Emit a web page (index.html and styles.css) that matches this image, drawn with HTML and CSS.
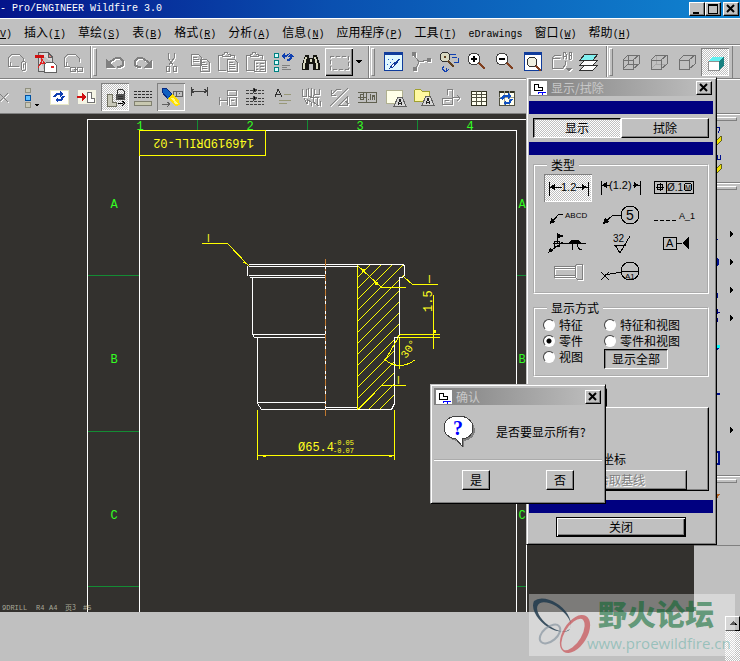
FILE: index.html
```html
<!DOCTYPE html>
<html lang="zh-CN">
<head>
<meta charset="utf-8">
<title>Pro/ENGINEER Wildfire 3.0</title>
<link rel="stylesheet" href="styles.css">
</head>
<body>
<div class="app">
  <header class="titlebar">
    <h1 class="titlebar-text">- Pro/ENGINEER Wildfire 3.0</h1>
    <div class="window-buttons">
      <button class="win-btn" aria-label="最小化"><svg width="14" height="12"><path d="M3 9h6v2H3z"/></svg></button>
      <button class="win-btn" aria-label="最大化"><svg width="14" height="12"><path d="M2 1h10v10H2zM3 3v7h8V3z" fill-rule="evenodd"/></svg></button>
      <button class="win-btn win-close" aria-label="关闭窗口"><svg width="14" height="12"><path class="cross" d="M3 2l7 7M10 2l-7 7"/></svg></button>
    </div>
  </header>

  <nav class="menubar">
    <a href="#"><span class="key"><u>V</u>)</span></a>
    <a href="#">插入<span class="key">(<u>I</u>)</span></a>
    <a href="#">草绘<span class="key">(<u>S</u>)</span></a>
    <a href="#">表<span class="key">(<u>B</u>)</span></a>
    <a href="#">格式<span class="key">(<u>R</u>)</span></a>
    <a href="#">分析<span class="key">(<u>A</u>)</span></a>
    <a href="#">信息<span class="key">(<u>N</u>)</span></a>
    <a href="#">应用程序<span class="key">(<u>P</u>)</span></a>
    <a href="#">工具<span class="key">(<u>T</u>)</span></a>
    <a href="#"><span class="key">eDrawings</span></a>
    <a href="#">窗口<span class="key">(<u>W</u>)</span></a>
    <a href="#">帮助<span class="key">(<u>H</u>)</span></a>
  </nav>

  <div class="toolbar">
    <div class="group group-first">
      <button class="tool" aria-label="附件"><svg class="emb" viewBox="0 0 28 28"><path d="M6 18V10l4-4h7l4 4v3M6 18h11M8 14v4M19 15v6l2 2 2-1v-8l-2-1-2 2M21 16v4"/></svg></button>
      <button class="tool" aria-label="导出 PDF"><svg viewBox="0 0 28 28"><path d="M8 4h10l4 4v6M8 4v19h6" stroke="#606060" fill="#d8d8d8"/><path d="M18 4v5h4z" fill="#f08080" stroke="#606060"/><path d="M5 7h9v3H5z" fill="#d01010"/><path d="M12 10c0 5-3 8-4 10M12 11c1 3 3 5 6 5M9 17c2-2 4-2 7-2" stroke="#e02020" fill="none"/><path d="M14 17l3-3h6l3 3v7H14z" fill="#fff" stroke="#606060"/><path d="M21 18h3v2h-3z" fill="#e02020"/></svg></button>
      <button class="tool" aria-label="链接"><svg class="emb" viewBox="0 0 28 28"><path d="M6 18V10l4-4h7l4 4v4M6 18h6M8 14v4M12 19h5v4h-5zM16 21h4M19 19h5v4h-5z"/></svg></button>
    </div>
    <div class="group">
      <i class="grip"></i>
      <button class="tool" aria-label="撤消"><svg class="emb thick" viewBox="0 0 28 28"><path d="M7 17l3-4 5-3h4l3 3v4l-3 2h-3"/><path d="M5 11v9h9z" fill="#808080" stroke="none"/></svg></button>
      <button class="tool" aria-label="重做"><svg class="emb thick" viewBox="0 0 28 28"><path d="M21 17l-3-4-5-3H9l-3 3v4l3 2h3"/><path d="M23 11v9h-9z" fill="#808080" stroke="none"/></svg></button>
      <button class="tool" aria-label="剪切"><svg class="emb" viewBox="0 0 28 28"><path d="M11 5v5l5 7M17 5v5l-5 7M9 18h3v5H9zM16 18h3v5h-3z"/></svg></button>
      <button class="tool" aria-label="复制"><svg class="emb" viewBox="0 0 28 28"><path d="M6 6h7l3 3v8H6zM8 9h4M8 11h6M8 13h6M15 11h6l3 3v9h-9zM17 14h3M17 16h5M17 18h5M17 20h5"/></svg></button>
      <button class="tool" aria-label="粘贴"><svg class="emb" viewBox="0 0 28 28"><path d="M9 7H5v15h8M17 7h4v3M9 8h8V6h-2l-1-2h-2l-1 2H9zM14 11h7l3 3v9H14zM16 14h4M16 16h6M16 18h6M16 20h6"/></svg></button>
      <button class="tool" aria-label="选择性粘贴"><svg class="emb" viewBox="0 0 28 28"><path d="M9 7H5v15h8M17 7h4v4M9 8h8V6h-2l-1-2h-2l-1 2H9zM13 12h11v11H13zM15 15h2M19 15h4M15 18h2M19 18h4M15 21h2M19 21h4"/></svg></button>
      <button class="tool" aria-label="再生"><svg viewBox="0 0 28 28"><path d="M5 5h4v4H5zM5 12h4v4H5zM5 19h4v4H5z" fill="#d8ffff" stroke="#008080"/><path d="M13 17h8M13 19h5M13 21h9" stroke="#808080"/><path d="M12 8l4-4v3c3 0 4-2 5-3v1c-1 3-3 4-5 4v3z" fill="#1040b0"/><path d="M19 9l3-4 3 4h-2c0 3-2 4-5 4v-2c2 0 3 0 3-2z" fill="#1040b0"/></svg></button>
      <button class="tool" aria-label="查找"><svg viewBox="0 0 28 28"><path d="M8 7h4v3h4V7h4l3 10v5h-7v-6h-4v6H5v-5z" fill="#151510"/><path d="M9 9l-2 8v4M18 9l2 8v4M14 11v3" stroke="#d8d8c0" stroke-width="2" fill="none"/></svg></button>
      <button class="tool raised" aria-label="选取框"><svg class="emb" viewBox="0 0 28 28"><path d="M5 8h18v13H5z" stroke-dasharray="4 2"/></svg></button>
      <button class="drop" aria-label="更多"><svg width="12" height="28"><path d="M3 12h6l-3 4z"/></svg></button>
    </div>
    <div class="group">
      <i class="grip"></i>
      <button class="tool" aria-label="重画"><svg viewBox="0 0 28 28"><path d="M5 4h18v18H5z" fill="#e0f8ff" stroke="#103c9c"/><path d="M5 4h18v3H5z" fill="#103c9c"/><path d="M9 11h1M11 14h1M8 16h1M13 11h1M11 18h1M14 16h1" stroke="#2060d0"/><path d="M21 11l-7 8-3 1 2-3z" fill="#fff" stroke="#103c9c"/></svg></button>
      <button class="tool" aria-label="旋转中心"><svg class="emb" viewBox="0 0 28 28"><path d="M7 7l5 7 9-2M12 14l-3 6"/><g fill="#808080"><circle cx="7" cy="6" r="2"/><circle cx="22" cy="12" r="2"/><circle cx="8" cy="21" r="2"/></g></svg></button>
      <button class="tool" aria-label="定向模式"><svg viewBox="0 0 28 28"><circle cx="10" cy="9" r="5" fill="#d8d8c0" stroke="#303030"/><path d="M10 8v2M13 13l6 6" stroke="#604020" stroke-width="2"/><path d="M15 6h6M17 9h5M23 10v4h-4M9 18l-2 3 4 3 3-3M11 20v4" stroke="#1040b0" fill="none"/></svg></button>
      <button class="tool" aria-label="放大"><svg viewBox="0 0 28 28"><circle cx="11" cy="11" r="6" fill="#fff" stroke="#404040"/><path d="M8 11h6M11 8v6" stroke="#000" stroke-width="2"/><path d="M16 15l6 6" stroke="#804020" stroke-width="2"/></svg></button>
      <button class="tool" aria-label="缩小"><svg viewBox="0 0 28 28"><circle cx="11" cy="11" r="6" fill="#fff" stroke="#404040"/><path d="M8 11h6" stroke="#000" stroke-width="2"/><path d="M16 15l6 6" stroke="#804020" stroke-width="2"/></svg></button>
      <button class="tool" aria-label="重新调整"><svg viewBox="0 0 28 28"><path d="M5 4h17v18H5z" fill="#fff" stroke="#103c9c"/><path d="M5 4h17v3H5z" fill="#103c9c"/><circle cx="13" cy="14" r="5" fill="#f0f0e0" stroke="#303030"/><path d="M17 18l5 5" stroke="#804020" stroke-width="2"/></svg></button>
      <button class="tool" aria-label="已命名视图"><svg class="emb" viewBox="0 0 28 28"><path d="M5 20V10l3-3h6M5 20h11l2-3v-4M5 10h8M16 11V6l1-2h1l1 2v5M16 8h3M22 11V4h2l1 2-1 1h-2M24 7l1 2-1 2h-2"/><path d="M19 20h6l-3 3z" fill="#808080"/></svg></button>
      <button class="tool" aria-label="层"><svg viewBox="0 0 28 28"><g stroke="#303030"><path d="M5 22l5-5h13l-5 5z" fill="#fff"/><path d="M5 17l5-5h13l-5 5z" fill="#fff"/><path d="M5 12l5-6h13l-5 6z" fill="#80f0f0"/></g></svg></button>
    </div>
    <div class="group">
      <i class="grip"></i>
      <button class="tool" aria-label="线框"><svg class="cube" viewBox="0 0 28 28"><path d="M6 12h10v9H6zM6 12l5-5h11v9l-6 5M16 12l6-5M11 7v9h11M11 16l-5 5"/></svg></button>
      <button class="tool" aria-label="隐藏线"><svg class="cube" viewBox="0 0 28 28"><path d="M11 8v8h10M11 16l-5 5" stroke="#a8a8a8"/><path d="M6 12h10v9H6zM6 12l5-5h11v9l-6 5M16 12l6-5"/></svg></button>
      <button class="tool" aria-label="无隐藏线"><svg class="cube" viewBox="0 0 28 28"><path d="M6 12h10v9H6zM6 12l5-5h11v9l-6 5M16 12l6-5"/></svg></button>
      <button class="tool pressed" aria-label="着色"><svg viewBox="0 0 28 28"><path d="M7 13h11v9H7z" fill="#fff" stroke="#909090"/><path d="M7 13l4-4h12l-5 4z" fill="#60f0f0"/><path d="M18 13l5-4v8l-5 5z" fill="#188080"/></svg></button>
    </div>
  </div>

  <div class="toolbar toolbar-second">
    <div class="group">
      <button class="tool tool-cut" aria-label="删除"><svg class="emb" viewBox="11 0 17 28"><path d="M10 10l9 9M19 10l-9 9"/></svg></button>
      <button class="tool" aria-label="对齐视图"><svg viewBox="0 0 28 28"><path d="M8 5h5v4H8zM8 19h5v5H8z" fill="#c8c8b8" stroke="#909080"/><path d="M8 12h5v5H8z" fill="#60c0ff" stroke="#0050a0"/><path d="M17 21h5l-2 3z"/></svg></button>
      <button class="tool" aria-label="更新"><svg viewBox="0 0 28 28"><path d="M5 7h18v14H5z" fill="#fff" stroke="#e8e8c8"/><path d="M8 14l3-4h4V8l3 3-3 3v-2h-3l-1 2zM20 13l-3 5h-4v2l-3-3 3-3v2h3l1-3z" fill="#1040b0"/></svg></button>
      <button class="tool" aria-label="移动视图"><svg viewBox="0 0 28 28"><path d="M5 7h18v14H5z" fill="#f4f4e4"/><path d="M14 9v10h7v-4h-3V9z" fill="#fff" stroke="#707070"/><path d="M4 13h5v-3l4 4-4 4v-3H4z" fill="#d01010"/></svg></button>
      <button class="tool pressed" aria-label="锁定视图"><svg viewBox="0 0 28 28"><path d="M6 11v12h9v-4h-4v-8z" fill="#c8c8b8" stroke="#707060"/><path d="M15 11h9v6h-9z" fill="#505050"/><path d="M16 11V8l2-2h3l2 2v3M17 13h5M17 15h5" stroke="#303030" fill="none"/><path d="M17 20h5M21 18l3 2-3 3" stroke="#000" fill="none"/></svg></button>
      <button class="tool" aria-label="线型"><svg viewBox="0 0 28 28"><path d="M5 8h18M5 11h18M5 14h18" stroke="#303030" stroke-dasharray="3 1"/><path d="M5 18h17v4H5z" fill="#c8c8b0" stroke="#808070"/></svg></button>
      <button class="tool sunk" aria-label="显示及拭除"><svg viewBox="0 0 28 28"><path d="M16 8h9v5h-9zM19 8v5M22 10h1M5 21h8M10 19l3 2-3 3" stroke="#606060" fill="none"/><path d="M5 5h4l6 6-4 5-6-7z" fill="#1060c0" stroke="#082880"/><path d="M11 15l4-4 7 7 1 4-5 1z" fill="#ffe000"/><path d="M15 15l5 6" stroke="#fff880" stroke-width="2"/></svg></button>
      <button class="tool" aria-label="尺寸"><svg class="dim" viewBox="0 0 28 28"><path d="M6 4v9M22 4v9M6 8h16M9 6l-3 2 3 2M19 6l3 2-3 2"/></svg></button>
      <button class="tool" aria-label="参照尺寸"><svg class="emb" viewBox="0 0 28 28"><path d="M6 22v-8M6 17h8M14 14v8M14 7v5h9V7h-9M16 22v-8h7v8h-7M18 17h3"/></svg></button>
      <button class="tool" aria-label="纵坐标"><svg class="dim" viewBox="0 0 28 28"><path d="M5 7h18M5 10h18M5 15h18M5 18h18M5 21h18" stroke-dasharray="3 1"/><path d="M12 5l4 2-4 3zM12 13l4 2-4 3z" fill="#000"/></svg></button>
      <button class="tool" aria-label="注释"><svg class="dim" viewBox="0 0 28 28"><path d="M6 14l3-8 4 8M7 11h4" stroke="#303030"/><path d="M15 11h7M10 17h12M10 20h8" stroke="#989878"/></svg></button>
      <button class="tool" aria-label="表面粗糙度"><svg class="emb" viewBox="0 0 28 28"><path d="M5 6v7h4V6M11 5v8h3V5M17 6v5h5V6M7 15l3 6v-5l4 3v4M13 14h9M16 12v7l6 4M20 15v6M23 18v5"/></svg></button>
      <button class="tool" aria-label="几何公差"><svg class="emb" viewBox="0 0 28 28"><path d="M6 7v5h5M7 11L12 6h4M5 23L23 5M14 22L22 14v8zM20 18l4 3"/></svg></button>
      <button class="tool" aria-label="公差框"><svg class="dim" viewBox="0 0 28 28"><path d="M5 9h18v10H5M13 9v10M5 14h8M7 12v4h3v-5zM15 17v-1M17 11v6M19 17v-5l1 2 1-2v5" stroke="#606050"/></svg></button>
      <button class="tool" aria-label="绘制注释"><svg viewBox="0 0 28 28"><path d="M5 7h16v13H5z" fill="#ffffe8" stroke="#b0b090"/><path d="M13 23l4-9h4l4 9z" fill="#d8d8d8" stroke="#606060"/><path d="M17 22l2-6 2 6M18 20h2" stroke="#202020" fill="none"/></svg></button>
      <button class="tool" aria-label="打开注释"><svg viewBox="0 0 28 28"><path d="M5 8l2-2h4l2 2h7v10H5z" fill="#fff9a0" stroke="#a0a030"/><path d="M13 22l4-9h4l4 9z" fill="#d8d8d8" stroke="#606060"/><path d="M17 21l2-6 2 6M18 19h2" stroke="#202020" fill="none"/></svg></button>
      <button class="tool" aria-label="剖面箭头"><svg class="emb" viewBox="0 0 28 28"><path d="M10 12V6h5v10M5 21v-6h10v6zM8 17h4M15 14h8M20 12l3 3-3 3"/></svg></button>
      <button class="tool" aria-label="表格"><svg viewBox="0 0 28 28"><path d="M6 8h15v14H6z" fill="#fffff0" stroke="#303020"/><path d="M6 11h15M6 14h15M6 18h15M11 8v14M16 8v14" stroke="#505040"/></svg></button>
      <button class="tool" aria-label="更新表格"><svg viewBox="0 0 28 28"><path d="M6 8h15v14H6z" fill="#fffff0" stroke="#505040"/><path d="M6 8h15v2H6z" fill="#303020"/><path d="M11 8v14M16 8v14M6 14h15" stroke="#a0a090"/><path d="M7 16l3-4h5v-2l3 3-3 3v-2h-3l-2 3zM20 16l-3 5h-4v2l-3-3 3-3v2h3l1-3z" fill="#1050c0"/></svg></button>
    </div>
  </div>

  <main class="workspace">
    <section class="sheet" aria-label="图纸">
      <svg class="drawing" width="527" height="498" viewBox="0 113 527 498" font-family="Liberation Mono, monospace">
        <g transform="translate(.5 .5)" fill="none" shape-rendering="crispEdges">
          <path stroke="#148c34" d="M197 118v11M307 118v11M417 118v11M87 274h52M87 430h52M87 585h52M516 274h11M516 430h11M516 585h11"/>
          <path stroke="#fff" d="M87 611V118H527M139 611V129H516V611M526 118V611"/>
          <path stroke="#ff0" d="M139 129H265V154H139z"/>
          <clipPath id="section"><path d="M357 263H404V276H399V334L394 337V402L391 408H357z"/></clipPath>
          <path clip-path="url(#section)" stroke="#ff0" d="M357 276l60-60M357 287l60-60M357 298l60-60M357 309l60-60M357 320l60-60M357 331l60-60M357 342l60-60M357 353l60-60M357 364l60-60M357 375l60-60M357 386l60-60M357 397l60-60M357 408l60-60M357 419l60-60M357 430l60-60M357 441l60-60"/>
          <path stroke="#fff" d="M248 263H403M248 265H357M247 264V274M248 274H325M249 276H325M403 263l1 2v9l-2 2h-3V334M252 276V333H325M252 333l2 3H325M257 336V402M257 401H325M257 402l4 6H391l3-6V336h5M325 265V408M325 406H357M357 265V408"/>
          <path stroke="#c07830" stroke-dasharray="7 3 2 3" d="M325 257V414"/>
          <path stroke="#ff0" d="M201 242h26l20 21M357 264l24 22h24M358 408l23-24h24M404 276l8 7h25M433 293v54M399 333h40M399 336h40M399 334l-14 24M384 358q15 12 31 0M399 336v31M257 408v50M394 408v50M257 454H394M357 265v143"/>
          <path fill="#ff0" d="M244 259l4 5-6-3zM361 267h3v3h-3zM374 280h3v3h-3zM262 453h3v2h-3zM388 453h3v2h-3zM433 328h2v3h-2z"/>
        </g>
        <g class="grid-mark" text-anchor="middle">
          <text x="140" y="129">1</text><text x="250" y="129">2</text><text x="360" y="129">3</text><text x="470" y="129">4</text>
          <text x="114" y="207">A</text><text x="114" y="362">B</text><text x="114" y="518">C</text>
          <text x="522" y="207">A</text><text x="522" y="362">B</text><text x="522" y="518">C</text>
        </g>
        <g fill="#ffff20" font-size="12">
          <text transform="translate(254 138) rotate(180)">146919DRILL-02</text>
          <text x="298" y="450">Ø65.4</text>
          <text x="333" y="444" font-size="7">-0.05</text>
          <text x="333" y="452" font-size="7">-0.07</text>
          <text transform="translate(432 311) rotate(-90)">1.5</text>
          <text transform="translate(406 358) rotate(-55)" font-size="11">30°</text>
          <g font-family="Liberation Sans, sans-serif" font-size="10">
            <text x="207" y="241">I</text><text x="428" y="282">I</text><text x="397" y="383">I</text>
          </g>
        </g>
        <g fill="#a8a898" font-size="7">
          <text x="2" y="609">9DRILL</text><text x="36" y="609">R4</text><text x="49" y="609">A4</text>
          <text x="65" y="609" font-family="Noto Sans CJK SC, sans-serif">页3</text><text x="83" y="609">#5</text>
        </g>
      </svg>
    </section>
    <aside class="sidebar">
      <div class="side-group">
        <i class="side-grip"></i>
        <button class="side-tool" aria-label="基准轴"><svg viewBox="0 0 40 28"><path d="M20 4h2l1 2-2 4" stroke="#001090" fill="none"/><path d="M18 19l6-6 1 4-5 5z" fill="#f0e000" stroke="#606020"/></svg></button>
        <button class="side-tool" aria-label="基准面"><svg viewBox="0 0 40 28"><path d="M20 4v5M23 4v5M20 8h3" stroke="#001090"/><path d="M18 19l6-6 1 4-5 5z" fill="#f0e000" stroke="#606020"/></svg></button>
      </div>
      <div class="side-group">
        <i class="side-grip"></i>
        <button class="side-tool" aria-label="选取"><svg viewBox="0 0 40 28"><path d="M8 6v14l4-4h6"/></svg></button>
        <button class="side-tool" aria-label="直线"><svg viewBox="0 0 40 28"><path d="M8 8l13 12" stroke="#001090"/><path d="M33 11l4 3-4 3z"/></svg></button>
        <button class="side-tool" aria-label="圆"><svg viewBox="0 0 40 28"><circle cx="15" cy="14" r="6" fill="none" stroke="#001090" stroke-width="2"/><path d="M33 11l4 3-4 3z"/></svg></button>
        <button class="side-tool" aria-label="圆弧"><svg viewBox="0 0 40 28"><path d="M8 10q12 0 13 12" fill="none" stroke="#001090"/><path d="M33 11l4 3-4 3z"/></svg></button>
        <button class="side-tool" aria-label="圆角"><svg viewBox="0 0 40 28"><path d="M20 5v5M18 8h5M20 14v4" stroke="#000080"/><path d="M33 11l4 3-4 3z"/></svg></button>
        <button class="side-tool" aria-label="样条"><svg viewBox="0 0 40 28"><path d="M8 20q10 4 14-6" fill="none" stroke="#001090" stroke-width="2"/><path d="M20 13h3v3h-3z" fill="#0ff"/></svg></button>
        <button class="side-tool" aria-label="点"><svg viewBox="0 0 40 28"><path d="M10 14h6M13 11v6" stroke="#001090"/></svg></button>
        <button class="side-tool" aria-label="投影"><svg viewBox="0 0 40 28"><path d="M10 6h13" stroke="#001090" stroke-width="2"/></svg></button>
        <button class="side-tool" aria-label="偏移"><svg viewBox="0 0 40 28"><path d="M10 10h8v8" fill="none" stroke="#001090"/><path d="M33 11l4 3-4 3z"/></svg></button>
        <button class="side-tool" aria-label="修剪"><svg viewBox="0 0 40 28"><path d="M10 8h12v12H10z" fill="none" stroke="#001090" stroke-width="2"/></svg></button>
      </div>
      <div class="side-group side-last">
        <i class="side-grip"></i>
        <button class="side-tool" aria-label="格式刷"><svg viewBox="0 0 40 28"><path d="M20 9h3l-3 5z" fill="#b06020"/></svg></button>
      </div>
    </aside>
  </main>

  <footer class="statusbar">
    <div class="scrollbar"><button class="scroll-up" aria-label="向上滚动"><svg width="12" height="11"><path d="M2 7l4-4 4 4z"/></svg></button></div>
  </footer>

  <section class="dialog show-dialog" aria-label="显示/拭除">
    <header class="dialog-title">
      <svg class="app-icon" viewBox="0 0 16 14"><path d="M0 0h16v14H0z" fill="#fff"/><path d="M3 3h4v3h4v3H3z" fill="none" stroke="#000"/><path d="M7 13v-2h8M11 11v3" stroke="#00f" fill="none"/></svg>
      <h2>显示/拭除</h2>
      <button class="win-btn" aria-label="关闭对话框"><svg width="12" height="11"><path class="cross" d="M2 2l7 7M9 2l-7 7"/></svg></button>
    </header>
    <div class="stripe"></div>
    <div class="mode-tabs"><button class="mode-on">显示</button><button>拭除</button></div>
    <div class="stripe"></div>
    <fieldset class="types">
      <legend>类型</legend>
      <div class="type-grid">
        <button class="type pressed" aria-label="尺寸"><svg viewBox="0 0 48 28"><path d="M5 8v14M44 8v14M5 13h13M32 13h12"/><path class="solid" d="M6 13l5-3v6zM43 13l-5-3v6z"/><text x="17" y="17">1.2</text></svg></button>
        <button class="type" aria-label="参照尺寸"><svg viewBox="0 0 48 28"><path d="M4 7v14M43 7v14M4 11h9M36 11h7"/><path class="solid" d="M5 11l5-3v6zM42 11l-5-3v6z"/><text x="12" y="15">(1.2)</text></svg></button>
        <button class="type" aria-label="几何公差"><svg viewBox="0 0 48 28"><path d="M4 7h39v12H4zM16 7v12M6 13h8M10 9v8"/><circle cx="10" cy="13" r="3"/><circle cx="38" cy="13" r="4"/><text x="17" y="17" font-size="10">Ø.1</text><text x="35" y="16" font-size="7">M</text></svg></button>
        <button class="type" aria-label="注释"><svg viewBox="0 0 48 28"><path d="M7 21l8-9h4"/><path class="solid" d="M6 22l1-6 4 4z"/><text x="21" y="16" font-size="8">ABCD</text></svg></button>
        <button class="type" aria-label="球标"><svg viewBox="0 0 48 28"><path d="M7 21l9-8h8"/><path class="solid" d="M6 22l2-6 4 4z"/><circle cx="33" cy="13" r="9"/><text x="29" y="18" font-size="14">5</text></svg></button>
        <button class="type" aria-label="轴"><svg viewBox="0 0 48 28"><path d="M4 18h24" stroke-dasharray="4 2"/><text x="29" y="17" font-size="9">A_1</text></svg></button>
        <button class="type" aria-label="符号"><svg viewBox="0 0 48 28"><path d="M5 22l14-10M13 14V3M9 13h33M28 13v7M33 13q1 7 5 7"/><circle cx="13" cy="14" r="3"/><path class="solid" d="M4 23l2-5 3 3zM13 3l7 3-7 3zM24 13l3-3h7l3 3z"/></svg></button>
        <button class="type" aria-label="表面粗糙度"><svg viewBox="0 0 48 28"><path d="M17 15h12M18 15l5 8 10-17"/><text x="16" y="12" font-size="10">32</text></svg></button>
        <button class="type" aria-label="基准平面"><svg viewBox="0 0 48 28"><path d="M13 7h13v12H13zM26 13h6M38 7v12"/><path class="solid" d="M32 13l6-5v10z"/><text x="16" y="17">A</text></svg></button>
        <button class="type" aria-label="修饰特征"><svg class="emb" viewBox="0 0 48 28"><path d="M10 8h21v11H10zM10 10h21M10 17h21M31 8l2-2h5v15h-5l-2-2"/></svg></button>
        <button class="type" aria-label="基准目标"><svg viewBox="0 0 48 28"><path d="M4 14l8 8M12 14l-8 8M8 17l16-3M24 13h18"/><circle cx="33" cy="13" r="9"/><text x="28" y="21" font-size="8">A1</text></svg></button>
      </div>
    </fieldset>
    <fieldset class="show-by">
      <legend>显示方式</legend>
      <div class="radio-grid">
        <label><input type="radio" name="by">特征</label>
        <label><input type="radio" name="by">特征和视图</label>
        <label><input type="radio" name="by" checked>零件</label>
        <label><input type="radio" name="by">零件和视图</label>
        <label><input type="radio" name="by">视图</label>
        <button class="show-all">显示全部</button>
      </div>
    </fieldset>
    <div class="tab-head"></div>
    <div class="tab-panel">
      <p>切换纵坐标</p>
      <button class="face pick" disabled>拾取基线</button>
    </div>
    <div class="stripe"></div>
    <button class="face close-btn">关闭</button>
  </section>

  <section class="dialog confirm-dialog" aria-label="确认">
    <header class="dialog-title">
      <svg class="app-icon" viewBox="0 0 16 14"><path d="M0 0h16v14H0z" fill="#fff"/><path d="M3 3h4v3h4v3H3z" fill="none" stroke="#000"/><path d="M7 13v-2h8M11 11v3" stroke="#00f" fill="none"/></svg>
      <h2>确认</h2>
      <button class="win-btn" aria-label="关闭确认"><svg width="12" height="11"><path class="cross" d="M2 2l7 7M9 2l-7 7"/></svg></button>
    </header>
    <div class="message">
      <svg class="bubble" width="34" height="34" viewBox="0 0 34 34">
        <path d="M17 3c9 0 15 5 15 12 0 6-4 10-11 11v7l-7-7C7 25 3 21 3 15 3 8 8 3 17 3z" fill="#808080"/>
        <path d="M15 1c9 0 15 5 15 12 0 6-4 10-11 11v7l-6-7C6 23 1 19 1 13 1 6 6 1 15 1z" fill="#fff" stroke="#404040"/>
        <text x="10" y="20" font-family="Liberation Serif, serif" font-size="20" font-weight="bold" fill="#00f">?</text>
      </svg>
      <p>是否要显示所有?</p>
    </div>
    <div class="answers"><button class="face">是</button><button class="face">否</button></div>
  </section>

  <div class="watermark">
    <svg width="62" height="58" viewBox="0 0 62 58">
      <g fill-rule="evenodd">
        <path d="M4 5A23 14 38 0 0 40 33A23 14 38 0 0 4 5zM8 9A20 10 38 0 0 40 33A20 10 38 0 0 8 9z" fill="#20394c" opacity=".85"/>
        <path d="M56 20A21 12 -58 0 0 34 56A21 12 -58 0 0 56 20zM52 23A18 9 -58 0 0 34 54A18 9 -58 0 0 52 23z" fill="#c8585c" opacity=".75"/>
        <ellipse cx="20" cy="38" rx="12" ry="7" transform="rotate(-40 20 38)" fill="none" stroke="#7c8a98" stroke-width="2" opacity=".6"/>
      </g>
    </svg>
    <div class="watermark-text"><strong>野火论坛</strong><span>www.proewildfire.cn</span></div>
  </div>
</div>
</body>
</html>
```
FILE: styles.css
```css
* { box-sizing: border-box; }
body { margin: 0; background: #c0c0c0; color: #000; font: 12px/16px "Noto Sans CJK SC", sans-serif; }
h1, h2, p { margin: 0; font-size: 12px; font-weight: normal; }
button { margin: 0; padding: 0; border: 0; background: none; color: inherit; font: inherit; }
svg { display: block; flex: none; shape-rendering: crispEdges; }
.app { position: relative; display: flex; flex-direction: column; min-height: 100vh; overflow: hidden; }

.titlebar { display: flex; align-items: center; justify-content: space-between; height: 18px; padding-right: 1px; background: linear-gradient(90deg, #04148a, #0a50b0 45%, #1084d0); color: #fff; }
.titlebar-text { font: 10px/18px "Liberation Mono", monospace; white-space: pre; }
.window-buttons { display: flex; }
.win-btn { display: grid; place-items: center; width: 16px; height: 14px; background: #c0c0c0; border: 1px solid; border-color: #fff #000 #000 #fff; box-shadow: inset -1px -1px #808080; }
.win-close { margin-left: 2px; }
.cross { stroke: #000; stroke-width: 1; fill: none; shape-rendering: auto; stroke-width: 2; }

.menubar { display: flex; gap: 12px; height: 27px; border-top: 1px solid #fff; border-bottom: 1px solid #808080; line-height: 25px; white-space: nowrap; }
.menubar a { color: #000; text-decoration: none; }
.key { font: 10px/12px "Liberation Mono", monospace; }

.toolbar { display: flex; height: 34px; border-top: 1px solid #fff; border-bottom: 1px solid #808080; }
.toolbar-second { border-bottom: 0; }
.group { display: flex; align-items: center; padding-right: 3px; }
.group + .group { border-left: 1px solid #fff; }
.toolbar:not(.toolbar-second) .group { border-right: 1px solid #808080; }
.group-first { padding-left: 2px; padding-right: 4px; }
.grip { width: 4px; height: 28px; margin: 0 4px 0 1px; border: 1px solid; border-color: #fff #808080 #808080 #fff; }
.tool { width: 28px; height: 28px; }
.tool svg { width: 100%; height: 100%; }
.tool-cut { width: 17px; }
.drop { width: 12px; height: 28px; }
.pressed { background: repeating-conic-gradient(#fff 0 25%, #c0c0c0 0 50%) 0 0 / 2px 2px; box-shadow: inset 1px 1px #808080, inset -1px -1px #fff; }
.sunk { box-shadow: inset 1px 1px #808080, inset -1px -1px #fff; }
.raised { box-shadow: inset 1px 1px #fff, inset -1px -1px #000, inset -2px -2px #808080; }
.emb { fill: none; stroke: #808080; filter: drop-shadow(1px 1px 0 #fff); }
.thick { stroke-width: 2; }
.cube { fill: none; stroke: #707070; }
.dim { fill: none; stroke: #404040; }

.workspace { display: flex; border-top: 1px solid #808080; }
.sheet { flex: 1; min-width: 0; background: #33312e; }
.drawing { shape-rendering: auto; }
.grid-mark { fill: #33ff22; font-size: 12px; }
.sidebar { width: 46px; background: #c0c0c0; }
.side-group { display: flex; flex-direction: column; padding: 0 3px 3px; border-top: 1px solid #fff; border-bottom: 1px solid #808080; }
.side-grip { height: 4px; margin: 2px 0; border: 1px solid; border-color: #fff #808080 #808080 #fff; }
.side-tool { width: 40px; height: 28px; }
.side-last { padding-bottom: 32px; }

.statusbar { display: flex; flex: 1; justify-content: flex-end; min-height: 50px; }
.scrollbar { width: 15px; margin-top: 4px; background: repeating-conic-gradient(#fff 0 25%, #c0c0c0 0 50%) 0 0 / 2px 2px; }
.scroll-up { display: grid; place-items: center; width: 15px; height: 15px; background: #c0c0c0; border: 1px solid; border-color: #fff #000 #000 #fff; }

.dialog { position: absolute; display: flex; flex-direction: column; background: #c0c0c0; border: 1px solid; border-color: #c0c0c0 #000 #000 #c0c0c0; box-shadow: inset 1px 1px #fff, inset -1px -1px #808080; }
.dialog-title { display: flex; align-items: center; gap: 4px; height: 17px; padding: 0 1px 0 2px; background: linear-gradient(90deg, #808080, #c0c0c0); color: #c8c8c8; }
.dialog-title h2 { flex: 1; line-height: 16px; }
.app-icon { width: 16px; height: 14px; }
.show-dialog { left: 526px; top: 77px; width: 191px; padding: 1px 3px 7px 2px; }
.stripe { height: 13px; background: #000080; }
.dialog-title + .stripe { margin-top: 5px; }
.mode-tabs { display: flex; height: 20px; margin: 4px; }
.mode-tabs button { flex: 1; border: 1px solid; border-color: #fff #000 #000 #fff; box-shadow: inset -1px -1px #808080; line-height: 16px; }
.mode-tabs .mode-on { border-color: #000 #fff #fff #000; box-shadow: inset 1px 1px #808080; background: repeating-conic-gradient(#fff 0 25%, #c0c0c0 0 50%) 0 0 / 2px 2px; }
fieldset { min-width: 0; margin: 0 4px; padding: 2px 8px 6px; border: 2px groove #fff; }
legend { height: 14px; margin-left: 4px; padding: 0 4px; line-height: 14px; }
.types { margin-top: 3px; }
.type-grid { display: grid; grid-template-columns: repeat(3, 48px); grid-auto-rows: 28px; column-gap: 5px; padding-left: 1px; }
.type svg { width: 48px; height: 28px; fill: none; stroke: #000; }
.type .emb { stroke: #808080; }
.type .solid { fill: #000; stroke: none; }
.type text { fill: #000; stroke: none; font-family: "Liberation Sans", sans-serif; }
.type text:not([font-size]) { font-size: 11px; }
.show-by { margin-top: 7px; }
.radio-grid { display: grid; grid-template-columns: 61px 1fr; grid-template-rows: 16px 16px 20px; }
.radio-grid label { display: flex; align-items: center; gap: 4px; height: 16px; white-space: nowrap; }
.radio-grid input { appearance: none; width: 12px; height: 12px; margin: 0; border: 1px solid; border-color: #404040 #fff #fff #404040; border-radius: 50%; background: #fff; }
.radio-grid input:checked { background: radial-gradient(circle, #000 2px, #fff 3px); }
.show-all { width: 64px; height: 20px; border: 1px solid; border-color: #000 #fff #fff #000; box-shadow: inset 1px 1px #808080; }
.tab-head { width: 74px; height: 19px; margin: 11px 0 0 4px; border: 1px solid; border-color: #fff #000 transparent #fff; }
.tab-panel { display: flex; flex-direction: column; justify-content: flex-end; align-items: flex-start; height: 84px; margin: 0 4px 9px; border: 1px solid; border-color: #fff #000 #000 #fff; box-shadow: inset -1px -1px #808080; }
.tab-panel p { margin: 0 0 3px 32px; }
.face { height: 20px; background: #c0c0c0; border: 1px solid; border-color: #fff #000 #000 #fff; box-shadow: inset -1px -1px #808080; line-height: 16px; }
.pick { width: 132px; margin-left: 21px; }
.pick:disabled { color: #808080; text-shadow: 1px 1px #fff; }
.close-btn { width: 130px; margin: 4px auto 0 27px; border-color: #000; box-shadow: inset 1px 1px #fff, inset -1px -1px #000, inset -2px -2px #808080; }

.confirm-dialog { left: 430px; top: 384px; width: 176px; padding: 3px; }
.message { display: flex; align-items: center; height: 56px; padding-left: 9px; border-bottom: 2px groove #fff; }
.message p { margin-left: 19px; white-space: nowrap; }
.answers { display: flex; justify-content: space-around; padding: 9px 0 10px; }
.answers .face { width: 28px; }

.watermark { position: absolute; left: 529px; top: 594px; display: flex; width: 206px; height: 62px; background: rgba(255, 255, 255, .36); }
.watermark svg { margin: 2px 0 0 1px; shape-rendering: auto; }
.watermark-text { margin-left: -5px; white-space: nowrap; }
.watermark strong { display: block; margin-left: 11px; font-size: 29px; line-height: 38px; font-weight: 900; color: rgba(0, 100, 40, .55); }
.watermark span { display: block; font: 15px/22px "Open Sans", sans-serif; color: rgba(90, 170, 160, .5); }
```
